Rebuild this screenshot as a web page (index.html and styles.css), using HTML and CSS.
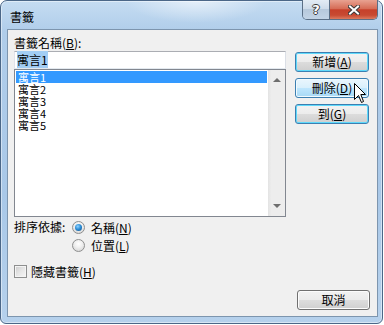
FILE: index.html
```html
<!DOCTYPE html>
<html lang="zh-Hant">
<head>
<meta charset="utf-8">
<title>書籤</title>
<link rel="stylesheet" href="styles.css">
</head>
<body>
<div class="window">
  <div class="titlebar">
    <span class="title">書籤</span>
    <div class="caption-btns">
      <div class="cbtn help"><span class="qmark">?</span></div>
      <div class="cbtn close">
        <svg width="12" height="10" viewBox="0 0 12 10">
          <path d="M2 1.5 L10 8.5 M10 1.5 L2 8.5" stroke="#3a3a3a" stroke-width="4" stroke-linecap="square" fill="none"/>
          <path d="M2 1.5 L10 8.5 M10 1.5 L2 8.5" stroke="#fff" stroke-width="2" stroke-linecap="square" fill="none"/>
        </svg>
      </div>
    </div>
  </div>
  <div class="client">
    <div class="main">
      <div class="left">
        <div class="label">書籤名稱(<u>B</u>):</div>
        <div class="textbox"><span class="sel">寓言1</span></div>
        <div class="listbox">
          <div class="items">
            <div class="item selected">寓言1</div>
            <div class="item">寓言2</div>
            <div class="item">寓言3</div>
            <div class="item">寓言4</div>
            <div class="item">寓言5</div>
          </div>
          <div class="scrollbar">
            <span class="arrow up"></span>
            <span class="arrow down"></span>
          </div>
        </div>
        <div class="sort">
          <span class="sort-label">排序依據:</span>
          <div class="radios">
            <div class="opt"><span class="radio on"></span>名稱(<u>N</u>)</div>
            <div class="opt"><span class="radio"></span>位置(<u>L</u>)</div>
          </div>
        </div>
        <div class="opt check"><span class="checkbox"></span>隱藏書籤(<u>H</u>)</div>
      </div>
      <div class="right">
        <div class="btn default">新增(<u>A</u>)</div>
        <div class="btn hover">刪除(<u>D</u>)</div>
        <div class="btn default">到(<u>G</u>)</div>
      </div>
    </div>
    <div class="footer">
      <div class="btn plain">取消</div>
    </div>
  </div>
  <svg class="cursor" width="13" height="21" viewBox="0 0 13 21">
    <path d="M0.5 0.5 L0.5 16.5 L4.5 12.5 L7.5 19.5 L9.5 18.5 L6.8 11.5 L11.5 11.5 Z" fill="#fff" stroke="#000" stroke-width="1" stroke-linejoin="miter"/>
  </svg>
</div>
</body>
</html>
```

FILE: styles.css
```css
* { box-sizing: border-box; margin: 0; padding: 0; }
html, body { width: 384px; height: 325px; overflow: hidden; background: #ffffff; }
body {
  font-family: "Noto Sans CJK TC", "Noto Sans", sans-serif;
  font-size: 12px;
  color: #000;
}
u { text-decoration: underline; text-underline-offset: 1px; }

.window {
  position: relative;
  width: 383px;
  height: 324px;
  border: 1px solid #4b6788;
  border-radius: 7px 7px 6px 6px;
  padding: 0 4px 6px 6px;
  display: flex;
  flex-direction: column;
  background:
    radial-gradient(ellipse 70px 22px at 195px 0, rgba(255,255,255,0.55), rgba(255,255,255,0)),
    linear-gradient(180deg, #c5dcf2 0%, #b0cdea 30px, #a9c8e8 60%, #b6d1ec 100%);
  box-shadow: inset 0 0 0 1px rgba(255,255,255,0.45);
}

.titlebar {
  height: 28px;
  position: relative;
  display: flex;
  align-items: flex-start;
}
.title {
  margin: 9px 0 0 3px;
  line-height: 14px;
  font-size: 12px;
}
.caption-btns {
  position: absolute;
  right: 0;
  top: -1px;
  display: flex;
  border: 1px solid #5b6f86;
  border-top: none;
  border-radius: 0 0 5px 5px;
  overflow: hidden;
  height: 20px;
}
.cbtn {
  height: 19px;
  display: flex;
  align-items: center;
  justify-content: center;
}
.help {
  width: 27px;
  border-right: 1px solid #5b6f86;
  background: linear-gradient(180deg, #e3ecf5 0%, #cfdcea 45%, #b7c9dc 50%, #c3d4e6 100%);
}
.qmark {
  font-family: "DejaVu Sans", sans-serif;
  font-weight: bold;
  font-size: 13px;
  line-height: 13px;
  color: #fff;
  text-shadow: 1px 0 #3a3a3a, -1px 0 #3a3a3a, 0 1px #3a3a3a, 0 -1px #3a3a3a;
}
.close {
  width: 47px;
  background: linear-gradient(180deg, #e8a291 0%, #d66d57 45%, #c6402a 52%, #c84a32 80%, #dc7a5e 100%);
}

.client {
  flex: 1;
  width: 371px;
  border: 1px solid #7d95ae;
  background: #f0f0f0;
  display: flex;
  flex-direction: column;
  padding: 5px 7px 6px 6px;
}
.main {
  display: flex;
  gap: 9px;
}
.left {
  width: 272px;
  display: flex;
  flex-direction: column;
}
.label {
  height: 16px;
  line-height: 16px;
}
.textbox {
  height: 18px;
  border: 1px solid #abadb3;
  border-color: #abadb3 #dbdfe6 #e3e9ef #e2e3ea;
  background: #fff;
  padding: 1px 0 0 2px;
  line-height: 14px;
}
.sel { background: #a2cdf3; }

.listbox {
  height: 148px;
  border: 1px solid #828790;
  background: #fff;
  display: flex;
}
.items {
  flex: 1;
  padding: 1px;
}
.item {
  height: 12px;
  line-height: 12px;
  font-size: 11px;
  padding-left: 2px;
}
.item.selected { background: #3399ff; color: #fff; }
.scrollbar {
  width: 17px;
  background: linear-gradient(90deg, #e3e3e3 0%, #ededed 20%, #ededed 100%);
  display: flex;
  flex-direction: column;
  justify-content: space-between;
  align-items: center;
  padding: 8px 0 8px;
}
.arrow {
  width: 0; height: 0;
  border-left: 4px solid transparent;
  border-right: 4px solid transparent;
}
.arrow.up { border-bottom: 4px solid #6e6e6e; }
.arrow.down { border-top: 4px solid #6e6e6e; }

.sort {
  display: flex;
  margin-top: 1px;
}
.sort-label {
  width: 58px;
  line-height: 18px;
}
.opt {
  display: flex;
  align-items: center;
  height: 18px;
}
.radio {
  width: 13px;
  height: 13px;
  border-radius: 50%;
  border: 1px solid #8e8f8f;
  background: radial-gradient(circle at 50% 35%, #ffffff 0%, #f0f0f0 40%, #cfcfcf 100%);
  margin-right: 6px;
  position: relative;
}
.radio.on::after {
  content: "";
  position: absolute;
  left: 2px; top: 2px;
  width: 7px; height: 7px;
  border-radius: 50%;
  background: radial-gradient(circle at 40% 35%, #8fd3ff 0%, #2e8fd8 45%, #0f4a80 100%);
}
.check { margin-top: 8px; }
.checkbox {
  width: 13px;
  height: 13px;
  border: 1px solid #8e8f8f;
  background: linear-gradient(135deg, #cbcbcb 0%, #e6e6e6 50%, #f6f6f6 100%);
  box-shadow: inset 0 0 0 1px #f4f4f4;
  margin-right: 4px;
}

.right {
  display: flex;
  flex-direction: column;
  gap: 6px;
  margin-top: 17px;
}
.btn {
  width: 74px;
  height: 20px;
  border-radius: 3px;
  display: flex;
  align-items: center;
  justify-content: center;
  line-height: 14px;
}
.btn.default {
  border: 1px solid #3c7fb1;
  box-shadow: inset 0 0 0 1px #5fd9fb;
  background: linear-gradient(180deg, #f3f3f3 0%, #ececec 48%, #dcdcdc 52%, #cfcfcf 100%);
}
.btn.hover {
  border: 1px solid #3c7fb1;
  box-shadow: inset 0 0 0 1px #f0fafe;
  background: linear-gradient(180deg, #eaf6fd 0%, #d9f0fc 48%, #bee6fd 52%, #a7d9f5 100%);
}
.btn.plain {
  border: 1px solid #707070;
  box-shadow: inset 0 0 0 1px #fcfcfc;
  background: linear-gradient(180deg, #f2f2f2 0%, #ebebeb 48%, #dddddd 52%, #cfcfcf 100%);
}
.footer {
  margin-top: auto;
  display: flex;
  justify-content: flex-end;
}
.footer .btn { width: 73px; }

.cursor {
  position: absolute;
  left: 353px;
  top: 82px;
}
```
